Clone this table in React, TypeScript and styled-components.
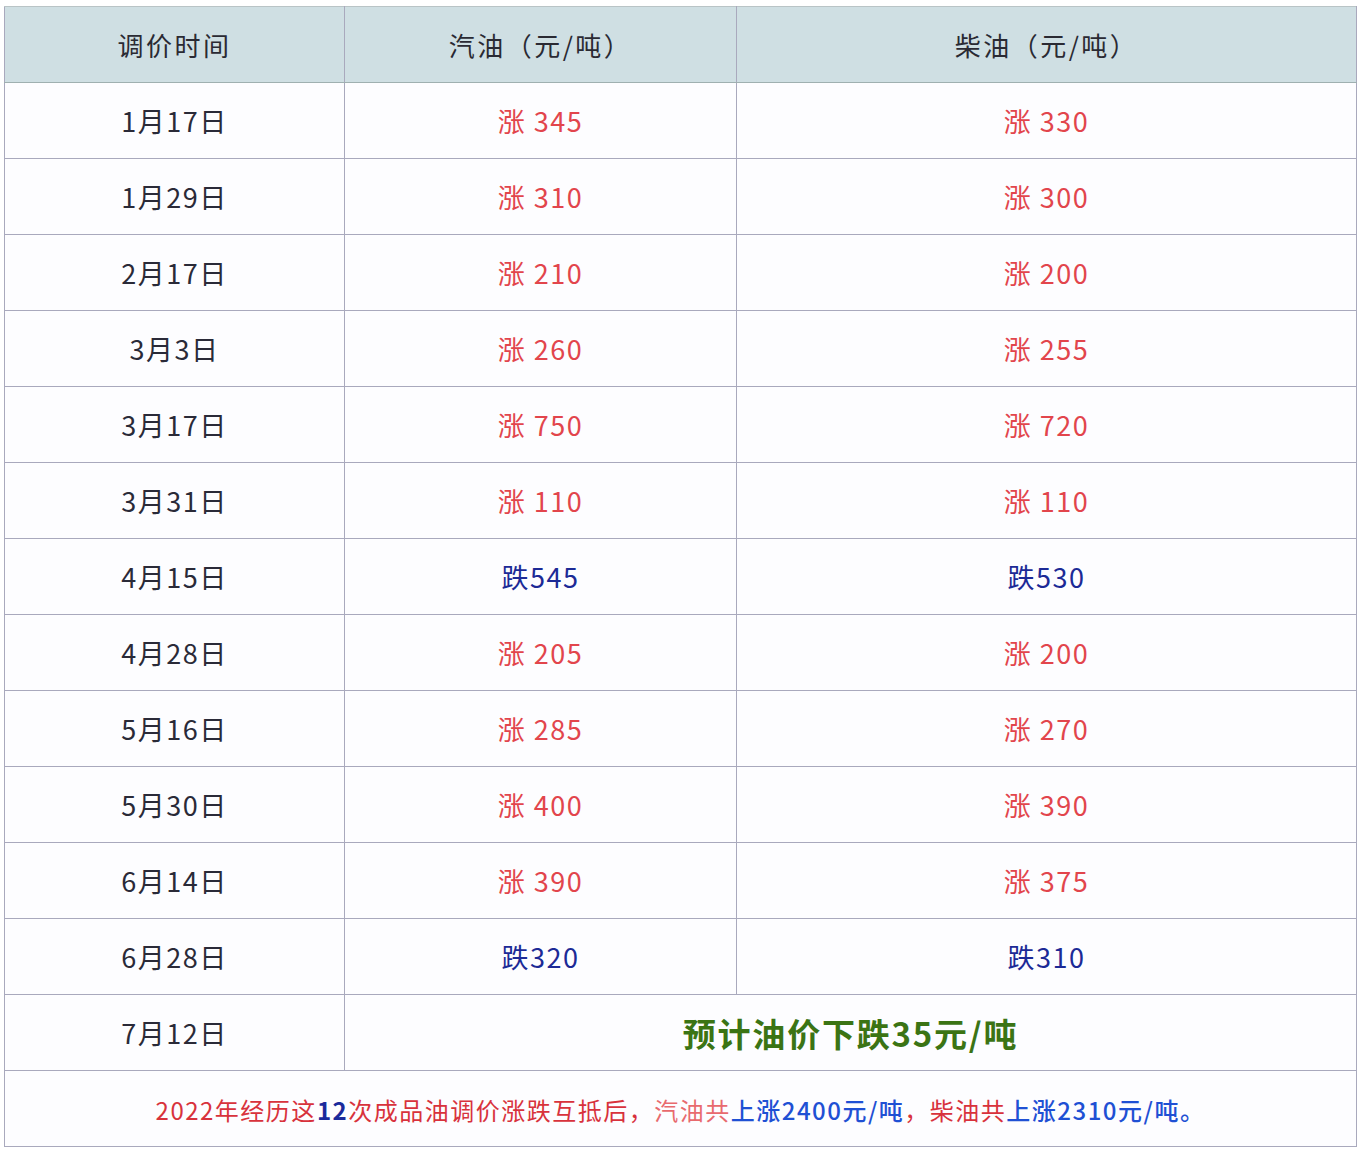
import React from 'react';
import styled, { createGlobalStyle } from 'styled-components';

const GlobalStyle = createGlobalStyle`
    html, body {
        margin: 0;
        padding: 0;
        background: #ffffff;
        font-family: "Noto Sans CJK SC", "Noto Sans", sans-serif;
    }
`

type Change = { dir: 'up' | 'down'; value: number };
type Row = { date: string; gas: Change; diesel: Change };

const rows: Row[] = [
    { date: '1月17日', gas: { dir: 'up', value: 345 }, diesel: { dir: 'up', value: 330 } },
    { date: '1月29日', gas: { dir: 'up', value: 310 }, diesel: { dir: 'up', value: 300 } },
    { date: '2月17日', gas: { dir: 'up', value: 210 }, diesel: { dir: 'up', value: 200 } },
    { date: '3月3日', gas: { dir: 'up', value: 260 }, diesel: { dir: 'up', value: 255 } },
    { date: '3月17日', gas: { dir: 'up', value: 750 }, diesel: { dir: 'up', value: 720 } },
    { date: '3月31日', gas: { dir: 'up', value: 110 }, diesel: { dir: 'up', value: 110 } },
    { date: '4月15日', gas: { dir: 'down', value: 545 }, diesel: { dir: 'down', value: 530 } },
    { date: '4月28日', gas: { dir: 'up', value: 205 }, diesel: { dir: 'up', value: 200 } },
    { date: '5月16日', gas: { dir: 'up', value: 285 }, diesel: { dir: 'up', value: 270 } },
    { date: '5月30日', gas: { dir: 'up', value: 400 }, diesel: { dir: 'up', value: 390 } },
    { date: '6月14日', gas: { dir: 'up', value: 390 }, diesel: { dir: 'up', value: 375 } },
    { date: '6月28日', gas: { dir: 'down', value: 320 }, diesel: { dir: 'down', value: 310 } },
];

const ChangeText = ({ c }: { c: Change }) =>
    c.dir === 'up'
        ? <Up>涨 {c.value}</Up>
        : <Down>跌{c.value}</Down>;

export default function App() {
    return (
        <>
            <GlobalStyle />
            <Page>
                <Table>
                    <colgroup>
                        <col style={{ width: 340 }} />
                        <col style={{ width: 392 }} />
                        <col />
                    </colgroup>
                    <thead>
                        <tr>
                            <HeadCell>调价时间</HeadCell>
                            <HeadCell>汽油（元/吨）</HeadCell>
                            <HeadCell>柴油（元/吨）</HeadCell>
                        </tr>
                    </thead>
                    <tbody>
                        {rows.map(r => (
                            <tr key={r.date}>
                                <Cell>{r.date}</Cell>
                                <Cell><ChangeText c={r.gas} /></Cell>
                                <Cell><ChangeText c={r.diesel} /></Cell>
                            </tr>
                        ))}
                        <tr>
                            <Cell>7月12日</Cell>
                            <Cell colSpan={2}><Forecast>预计油价下跌35元/吨</Forecast></Cell>
                        </tr>
                        <tr>
                            <Cell colSpan={3}>
                                <Summary>
                                    2022年经历这<Count>12</Count>次成品油调价涨跌互抵后，
                                    <Soft>汽油共</Soft><Total>上涨2400元/吨</Total>，柴油共<Total>上涨2310元/吨。</Total>
                                </Summary>
                            </Cell>
                        </tr>
                    </tbody>
                </Table>
            </Page>
        </>
    );
}

const Page = styled.div`
    padding: 6px 9px 6px 4px;
`

const Table = styled.table`
    width: 1353px;
    table-layout: fixed;
    border-collapse: collapse;
    border: 1px solid #a9a9bd;
    background: #fdfdff;
`

const HeadCell = styled.th`
    height: 75px;
    padding: 0;
    background: #cfdfe3;
    border: 1px solid #a9a9bd;
    border-top-color: #b9c4c6;
    border-bottom-color: #9fb0b0;
    color: #2a2a33;
    font-size: 26px;
    font-weight: 400;
    letter-spacing: 2.5px;
    text-align: center;
`

const Cell = styled.td`
    height: 75px;
    padding: 0;
    border: 1px solid #a9a9bd;
    color: #2a2a38;
    font-size: 27px;
    letter-spacing: 1.5px;
    text-align: center;
`

const Up = styled.span`
    color: #e2454c;
`

const Down = styled.span`
    color: #1c2a96;
`

const Forecast = styled.span`
    color: #3b7414;
    font-size: 33px;
    font-weight: 700;
    letter-spacing: 1.8px;
`

const Summary = styled.span`
    color: #d8323c;
    font-size: 24px;
    letter-spacing: 1.5px;
`

const Count = styled.b`
    color: #1a2a9c;
    font-weight: 700;
`

const Soft = styled.span`
    color: #e86a6e;
`

const Total = styled.span`
    color: #1f50d4;
    font-weight: 500;
`
